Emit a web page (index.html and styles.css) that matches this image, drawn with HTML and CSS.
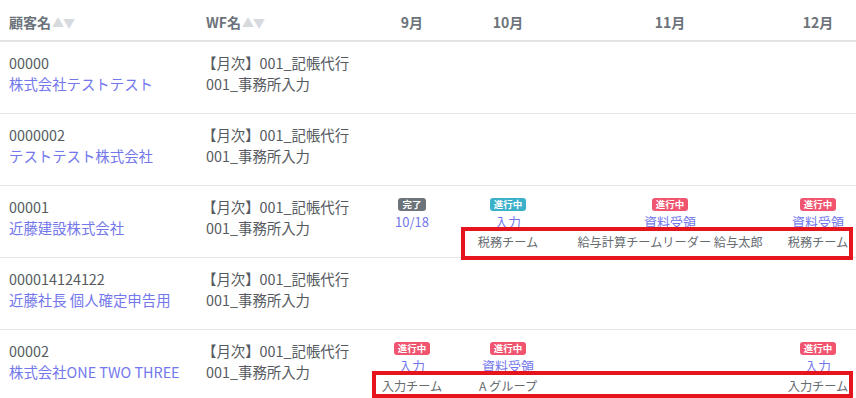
FILE: index.html
```html
<!DOCTYPE html>
<html lang="ja">
<head>
<meta charset="utf-8">
<link rel="stylesheet" href="styles.css">
</head>
<body>
<div class="wrap">
<table class="grid">
  <colgroup>
    <col class="c-name"><col class="c-wf"><col class="c-m9"><col class="c-m10"><col class="c-m11"><col class="c-m12">
  </colgroup>
  <thead>
    <tr>
      <th class="th-left">顧客名<span class="sort">▲▼</span></th>
      <th class="th-left">WF名<span class="sort">▲▼</span></th>
      <th>9月</th>
      <th>10月</th>
      <th>11月</th>
      <th>12月</th>
    </tr>
  </thead>
  <tbody>
    <tr>
      <td class="info"><div>00000</div><a class="link">株式会社テストテスト</a></td>
      <td class="info"><div class="wf">【月次】001_記帳代行</div><div>001_事務所入力</div></td>
      <td></td><td></td><td></td><td></td>
    </tr>
    <tr>
      <td class="info"><div>0000002</div><a class="link">テストテスト株式会社</a></td>
      <td class="info"><div class="wf">【月次】001_記帳代行</div><div>001_事務所入力</div></td>
      <td></td><td></td><td></td><td></td>
    </tr>
    <tr>
      <td class="info"><div>00001</div><a class="link">近藤建設株式会社</a></td>
      <td class="info"><div class="wf">【月次】001_記帳代行</div><div>001_事務所入力</div></td>
      <td class="m"><div class="bline"><span class="badge done">完了</span></div><div class="mlink">10/18</div></td>
      <td class="m"><div class="bline"><span class="badge prog">進行中</span></div><div class="mlink">入力</div><div class="team">税務チーム</div></td>
      <td class="m"><div class="bline"><span class="badge late">進行中</span></div><div class="mlink">資料受領</div><div class="team">給与計算チームリーダー 給与太郎</div></td>
      <td class="m"><div class="bline"><span class="badge late">進行中</span></div><div class="mlink">資料受領</div><div class="team">税務チーム</div></td>
    </tr>
    <tr>
      <td class="info"><div>000014124122</div><a class="link">近藤社長 個人確定申告用</a></td>
      <td class="info"><div class="wf">【月次】001_記帳代行</div><div>001_事務所入力</div></td>
      <td></td><td></td><td></td><td></td>
    </tr>
    <tr>
      <td class="info"><div>00002</div><a class="link">株式会社ONE TWO THREE</a></td>
      <td class="info"><div class="wf">【月次】001_記帳代行</div><div>001_事務所入力</div></td>
      <td class="m"><div class="bline"><span class="badge late">進行中</span></div><div class="mlink">入力</div><div class="team">入力チーム</div></td>
      <td class="m"><div class="bline"><span class="badge late">進行中</span></div><div class="mlink">資料受領</div><div class="team">A グループ</div></td>
      <td class="m"></td>
      <td class="m"><div class="bline"><span class="badge late">進行中</span></div><div class="mlink">入力</div><div class="team">入力チーム</div></td>
    </tr>
  </tbody>
</table>
<div class="mark mark-1"></div>
<div class="mark mark-2"></div>
</div>
</body>
</html>
```

FILE: styles.css
```css
html, body {
  margin: 0;
  padding: 0;
  background: #fff;
  overflow: hidden;
}
body {
  font-family: "Noto Sans CJK JP", "Noto Sans", sans-serif;
  color: #555a60;
  font-size: 14px;
}
.wrap {
  position: relative;
  width: 863px;
}
.grid {
  width: 863px;
  border-collapse: collapse;
  table-layout: fixed;
}
.c-name { width: 197px; }
.c-wf { width: 178px; }
.c-m9 { width: 74px; }
.c-m10 { width: 118px; }
.c-m11 { width: 206px; }
.c-m12 { width: 90px; }

th {
  height: 41px;
  padding: 4px 9px 0;
  box-sizing: border-box;
  font-size: 14px;
  font-weight: 700;
  color: #6c737a;
  text-align: center;
  vertical-align: middle;
  border-bottom: 2px solid #e2e3e5;
  white-space: nowrap;
  line-height: 20px;
}
th.th-left { text-align: left; }
.sort {
  color: #d6d9de;
  font-size: 12px;
  letter-spacing: -1px;
  margin-left: 1px;
}
tbody tr {
  height: 72px;
}
tbody tr + tr td {
  border-top: 1px solid #e2e3e5;
}
td {
  vertical-align: top;
  padding: 0 9px;
  white-space: nowrap;
}
td.info {
  padding-top: 10px;
  line-height: 21px;
  font-size: 14.4px;
}
.wf { margin-left: -4px; }
.link {
  color: #7377ec;
  display: block;
}
td.m {
  text-align: center;
  padding: 12px 0 0;
  font-size: 12px;
  line-height: 20px;
}
.bline {
  height: 14px;
  line-height: 14px;
}
.badge {
  display: inline-block;
  font-size: 9.5px;
  font-weight: 700;
  line-height: 13px;
  height: 13px;
  padding: 0 4px;
  border-radius: 3px;
  color: #fff;
  vertical-align: top;
}
.badge.done { background: #6c737a; }
.badge.prog { background: #3bb0c9; }
.badge.late { background: #f0546f; }
.mlink {
  color: #7377ec;
  font-size: 13px;
}
.team {
  color: #666b70;
  font-size: 12.2px;
}
.mark {
  position: absolute;
  border: 4px solid #e6141d;
  box-sizing: border-box;
}
.mark-1 {
  left: 461px;
  top: 227px;
  width: 392px;
  height: 33px;
}
.mark-2 {
  left: 372px;
  top: 371px;
  width: 481px;
  height: 27px;
}
```
